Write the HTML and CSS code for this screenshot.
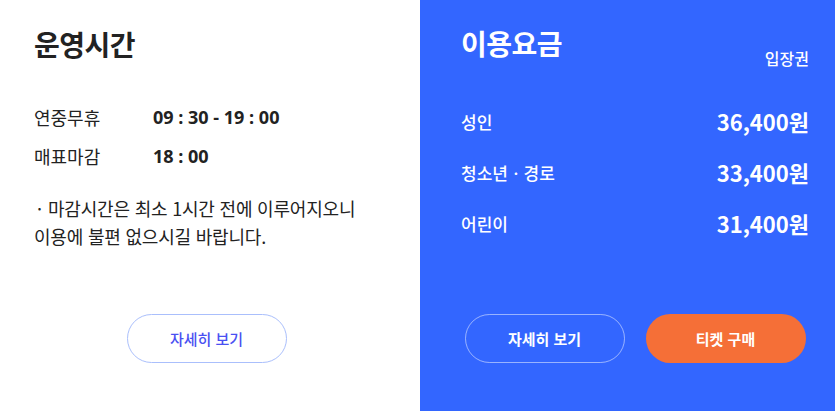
FILE: index.html
```html
<!DOCTYPE html>
<html lang="ko">
<head>
<meta charset="utf-8">
<link rel="stylesheet" href="styles.css">
</head>
<body>
<div class="wrap">
  <section class="panel hours">
    <h2 class="title">운영시간</h2>
    <dl class="hours-list">
      <div class="hours-row"><dt>연중무휴</dt><dd>09 : 30 - 19 : 00</dd></div>
      <div class="hours-row"><dt>매표마감</dt><dd>18 : 00</dd></div>
    </dl>
    <p class="note"><span class="dot">·</span>마감시간은 최소 1시간 전에 이루어지오니<br>이용에 불편 없으시길 바랍니다.</p>
    <div class="btns">
      <a class="btn btn-line-blue">자세히 보기</a>
    </div>
  </section>
  <section class="panel fee">
    <div class="fee-head">
      <h2 class="title">이용요금</h2>
      <span class="fee-sub">입장권</span>
    </div>
    <ul class="fee-list">
      <li><span>성인</span><strong>36,400원</strong></li>
      <li><span>청소년ㆍ경로</span><strong>33,400원</strong></li>
      <li><span>어린이</span><strong>31,400원</strong></li>
    </ul>
    <div class="btns">
      <a class="btn btn-line-white">자세히 보기</a>
      <a class="btn btn-orange">티켓 구매</a>
    </div>
  </section>
</div>
</body>
</html>
```
FILE: styles.css
```css
* { box-sizing: border-box; }
html, body { margin: 0; padding: 0; }
body {
  font-family: "Noto Sans CJK KR", "Noto Sans", sans-serif;
  color: #222;
  background: #fff;
}
.wrap {
  display: flex;
  width: 835px;
  height: 411px;
}
.panel {
  display: flex;
  flex-direction: column;
}
.hours {
  width: 420px;
  padding: 24px 41px 0 34px;
  background: #fff;
}
.fee {
  flex: 1;
  padding: 23px 26px 0 41px;
  background: #3366ff;
  color: #fff;
}
.title {
  margin: 0;
  font-size: 28px;
  line-height: 40px;
  font-weight: 700;
  letter-spacing: -0.5px;
}
.hours .title { color: #222; }
.hours-list {
  margin: 41px 0 0 0;
  display: flex;
  flex-direction: column;
  gap: 15px;
}
.hours-row {
  display: flex;
  font-size: 18px;
  line-height: 24px;
}
.hours-row dt { width: 119px; }
.hours-row dd {
  margin: 0;
  font-family: "Open Sans", "Noto Sans CJK KR", sans-serif;
  font-weight: 700;
}
.note {
  margin: 26px 0 0 0;
  font-size: 18px;
  line-height: 28px;
  letter-spacing: -0.2px;
}
.dot {
  display: inline-block;
  width: 14px;
  padding-left: 3px;
}
.btns {
  margin-top: auto;
  margin-bottom: 48px;
  display: flex;
  justify-content: center;
  gap: 21px;
}
.btn {
  display: flex;
  align-items: center;
  justify-content: center;
  width: 160px;
  height: 49px;
  border-radius: 25px;
  font-size: 15px;
  font-weight: 700;
  text-decoration: none;
}
.btn-line-blue {
  border: 1px solid #aabffc;
  color: #4a50f2;
  font-weight: 500;
}
.btn-line-white {
  border: 1px solid rgba(255,255,255,0.5);
  color: #fff;
}
.btn-orange {
  background: #f56f37;
  color: #fff;
}
.fee-head {
  display: flex;
  justify-content: space-between;
  align-items: flex-end;
}
.fee-sub {
  font-size: 16px;
  line-height: 22px;
  font-weight: 500;
  margin-bottom: -6px;
}
.fee-list {
  list-style: none;
  margin: 42px 0 0 0;
  padding: 0;
  display: flex;
  flex-direction: column;
  gap: 19px;
}
.fee-list li {
  display: flex;
  justify-content: space-between;
  align-items: center;
  height: 32px;
}
.fee-list span {
  font-size: 17px;
  font-weight: 500;
}
.fee-list strong {
  font-size: 22px;
  font-weight: 700;
}
```
